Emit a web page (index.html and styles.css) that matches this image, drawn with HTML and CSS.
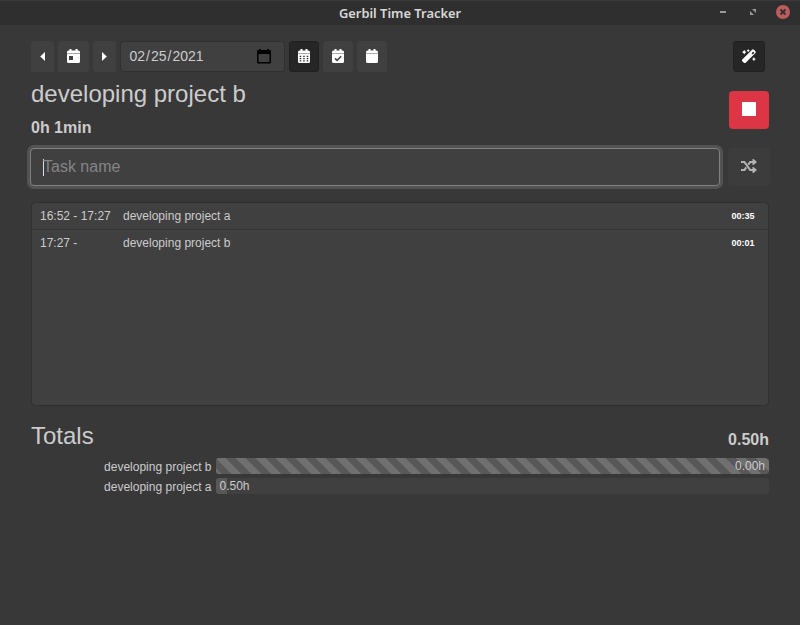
FILE: index.html
```html
<!DOCTYPE html>
<html lang="en">
<head>
<meta charset="utf-8">
<title>Gerbil Time Tracker</title>
<link rel="stylesheet" href="styles.css">
</head>
<body>
<header class="titlebar">
  <h1>Gerbil Time Tracker</h1>
  <div class="window-controls">
    <svg width="6" height="14"><path d="M0 6h6v2H0z" fill="#999"/></svg>
    <svg width="6" height="14"><path d="M2 4h4v4zM0 6v4h4z" fill="#999"/></svg>
    <svg width="14" height="14"><circle cx="7" cy="7" r="7" fill="#bd5c5c"/><path d="M4.500 4.500l5 5m0-5l-5 5" stroke="#333" stroke-width="2"/></svg>
  </div>
</header>
<main>
  <div class="toolbar">
    <button class="btn narrow" aria-label="Previous day"><svg width="5" height="9" viewBox="0 0 5 9"><path d="M5 0v9L.2 4.500z"/></svg></button>
    <button class="btn today" aria-label="Today"><svg width="13" height="14" viewBox="0 0 13 14"><path fill-rule="evenodd" d="M0 5h13v7.500q0 1.500-1.500 1.500h-10Q0 14 0 12.500zM2 7v4h4V7zM0 4V3q0-1.500 1.500-1.500h1V0h2v1.500h4V0h2v1.500h1Q13 1.500 13 3v1z"/><path d="M0 4h13v1H0z" fill="#aaa"/></svg></button>
    <button class="btn narrow next" aria-label="Next day"><svg width="5" height="9" viewBox="0 0 5 9"><path d="M0 0v9l4.800-4.500z"/></svg></button>
    <div class="date"><div class="fields"><span>02</span>/<span>25</span>/<span>2021</span></div><svg width="14" height="15" viewBox="0 0 14 15"><path d="M1 1h1V0h2v1h6V0h2v1h1q1 0 1 1v11q0 1.500-1 1.500H1q-1 0-1-1.500V2q0-1 1-1zm.5 4v8h11V5z" fill="#000" fill-rule="evenodd"/></svg></div>
    <button class="btn square active" aria-label="Month"><svg width="12" height="14" viewBox="0 0 12 14"><path fill-rule="evenodd" d="M0 5h12v7.500q0 1.500-1.500 1.500h-9Q0 14 0 12.500zM1.700 6.700v1.200h1.500V6.700zm3.500 0v1.200h1.500V6.700zm3.500 0v1.200h1.500V6.700zm-7 2.300v1.200h1.500V9zm3.500 0v1.200h1.500V9zm3.500 0v1.200h1.500V9zm-7 2.300v1.200h1.500v-1.200zm3.500 0v1.200h1.500v-1.200zm3.500 0v1.200h1.500v-1.200zM0 4V3q0-1.500 1.500-1.500h1V0h2v1.500h3V0h2v1.500h1Q12 1.500 12 3v1z"/><path d="M0 4h12v1H0z" fill="#aaa"/></svg></button>
    <button class="btn square" aria-label="Checked days"><svg width="12" height="14" viewBox="0 0 12 14"><path d="M0 5h12v7.500q0 1.500-1.500 1.500h-9Q0 14 0 12.500zM0 4V3q0-1.500 1.500-1.500h1V0h2v1.500h3V0h2v1.500h1Q12 1.500 12 3v1z"/><path d="M0 4h12v1H0z" fill="#aaa"/><path d="M3 9.400l2.100 2L9.200 7.300" fill="none" stroke="#404040" stroke-width="1.500"/></svg></button>
    <button class="btn square" aria-label="Single day"><svg width="12" height="14" viewBox="0 0 12 14"><path d="M0 5h12v7.500q0 1.500-1.500 1.500h-9Q0 14 0 12.500zM0 4V3q0-1.500 1.500-1.500h1V0h2v1.500h3V0h2v1.500h1Q12 1.500 12 3v1z"/><path d="M0 4h12v1H0z" fill="#aaa"/></svg></button>
    <button class="btn wand" aria-label="Magic"><svg width="14" height="14" viewBox="0 0 14 14"><path fill-rule="evenodd" d="M.3 10.600L10.100.7q.9-.8 1.800 0l1.500 1.500q.8.900 0 1.800L3.700 13.700q-.9.700-1.800 0L.3 12.300q-.7-.8 0-1.700zm9.300-6.400l1.200 1.200 1.500-1.600-1.200-1.200z"/><path d="M2.200.8l.8 1.500 1.500.8L3 3.900l-.8 1.500-.8-1.500L0 3.100l1.400-.8zM6.200 0l.6 1 1 .6-1 .6-.6 1-.6-1-1-.6 1-.6zM11.900 8l.7 1.400 1.400.7-1.400.7-.7 1.400-.7-1.400-1.400-.7 1.400-.7z"/></svg></button>
  </div>
  <section class="current">
    <div>
      <h2>developing project b</h2>
      <p class="elapsed">0h 1min</p>
    </div>
    <button class="stop" aria-label="Stop"><svg width="14" height="14"><rect width="14" height="14" rx=".5"/></svg></button>
  </section>
  <div class="entry">
    <div class="task"><i class="caret"></i>Task name</div>
    <button class="shuffle" aria-label="Shuffle"><svg width="16" height="14" viewBox="0 0 16 14"><path d="M0 3h3.400L9.200 11H13M0 11h3.400l1.900-2.600M7.300 5.600L9.200 3H13" fill="none" stroke="#b4b4b4" stroke-width="2.100"/><path d="M11.500 0h1L16 3l-3.500 3h-1zM11.500 8h1l3.500 3-3.500 3h-1z" fill="#b4b4b4"/></svg></button>
  </div>
  <div class="log">
    <div class="row"><span class="time">16:52 - 17:27</span><span>developing project a</span><b>00:35</b></div>
    <div class="row"><span class="time">17:27 -</span><span>developing project b</span><b>00:01</b></div>
  </div>
  <div class="totals-head"><h2>Totals</h2><strong>0.50h</strong></div>
  <div class="total"><span class="name">developing project b</span><div class="track striped"><span>0.00h</span></div></div>
  <div class="total"><span class="name">developing project a</span><div class="track partial"><span>0.50h</span></div></div>
</main>
</body>
</html>
```
FILE: styles.css
```css
* { box-sizing: border-box; }
body {
  margin: 0;
  height: 625px;
  overflow: hidden;
  background: #383838;
  color: #ccc;
  font: 12px/18px "Liberation Sans", Arial, sans-serif;
}
h1, h2, p { margin: 0; font-weight: 400; }
svg { display: block; fill: #fff; }
button { border: 0; padding: 0; display: flex; align-items: center; justify-content: center; }

.titlebar {
  position: relative;
  height: 25px;
  background: #2f2f2f;
  border-top: 1px solid #3b3b3b;
  display: flex;
  justify-content: center;
}
.titlebar h1 { font: 600 12.9px/24px "Noto Sans", sans-serif; color: #d8d8d8; }
.window-controls { position: absolute; right: 10px; top: 4px; display: flex; gap: 24px; }
.window-controls svg:last-child { margin-left: -4px; }

main { padding: 16px 31px; }
.toolbar { display: flex; gap: 4px; height: 31px; }
.btn { height: 31px; border-radius: 3px; background: #404040; padding-bottom: 1px; }
.narrow { width: 23px; }
.next { padding-right: 1px; }
.today { width: 31px; }
.square { width: 30px; }
.active { background: #262626; border: 1px solid #202020; }
.wand { width: 32px; margin: 0 4px 0 auto; background: #262626; border: 1px solid #202020; }
.date {
  width: 165px;
  padding: 0 13px 1px 7.500px;
  display: flex;
  align-items: center;
  justify-content: space-between;
  border: 1px solid #303030;
  border-radius: 3px;
  background: #404040;
  font-size: 14px;
}
.fields span { padding: 0 1px; }

.current { display: flex; justify-content: space-between; height: 76px; padding-top: 8px; }
h2 { font-size: 24px; line-height: 28px; }
.elapsed { margin-top: 8px; font-size: 16px; line-height: 24px; font-weight: 700; }
.stop { margin-top: 11px; width: 40px; height: 38px; padding-bottom: 2px; border-radius: 4px; background: #dc3545; }

.entry { display: flex; gap: 8px; margin: 0 -1px; height: 38px; }
.task {
  flex: 1;
  display: flex;
  align-items: center;
  padding-left: 12px;
  border: 1px solid #808080;
  border-radius: 4px;
  background: #404040;
  box-shadow: 0 0 0 3px #535353;
  color: #858585;
  font-size: 16px;
}
.caret { width: 1px; height: 17px; margin-right: -1px; background: #ddd; }
.shuffle { width: 42px; padding-bottom: 2px; border-radius: 4px; background: #3c3c3c; }

.log {
  height: 204px;
  margin-top: 16px;
  border: 1px solid #303030;
  border-radius: 4px;
  background: #404040;
}
.row { display: flex; align-items: center; height: 27px; padding: 0 13.500px 0 8px; border-bottom: 1px solid #363636; }
.row:last-child { height: 26px; border: 0; }
.time { width: 83px; }
.row b { margin-left: auto; color: #fff; font-size: 9px; }

.totals-head { display: flex; justify-content: space-between; height: 52px; padding-top: 16px; }
.totals-head strong { font-size: 16px; line-height: 35px; }
.total { display: flex; height: 16px; margin-bottom: 4px; gap: 4.500px; }
.name { width: 180.500px; text-align: right; }
.track { flex: 1; border-radius: 3px; padding: 0 4px 0 3.500px; line-height: 16px; background: #404040; }
.striped {
  text-align: right;
  background: linear-gradient(45deg, #707070 25%, #585858 25%, #585858 50%, #707070 50%, #707070 75%, #585858 75%) 0 0 / 20px 20px;
}
.partial { background: linear-gradient(90deg, #585858 11px, #404040 11px); }
```
